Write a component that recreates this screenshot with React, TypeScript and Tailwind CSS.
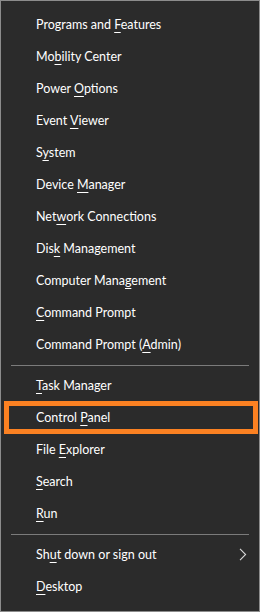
import React from "react";

type Item = { label: string; key?: number; highlight?: boolean; submenu?: boolean };

// index of the access-key letter that gets underlined
const groups: Item[][] = [
  [
    { label: "Programs and Features", key: 13 },
    { label: "Mobility Center", key: 2 },
    { label: "Power Options", key: 6 },
    { label: "Event Viewer", key: 6 },
    { label: "System", key: 1 },
    { label: "Device Manager", key: 7 },
    { label: "Network Connections", key: 3 },
    { label: "Disk Management", key: 3 },
    { label: "Computer Management", key: 13 },
    { label: "Command Prompt", key: 0 },
    { label: "Command Prompt (Admin)", key: 16 },
  ],
  [
    { label: "Task Manager", key: 0 },
    { label: "Control Panel", key: 8, highlight: true },
    { label: "File Explorer", key: 5 },
    { label: "Search", key: 0 },
    { label: "Run", key: 0 },
  ],
  [
    { label: "Shut down or sign out", key: 2, submenu: true },
    { label: "Desktop", key: 0 },
  ],
];

function Label({ text, k }: { text: string; k?: number }) {
  if (k === undefined) return <span>{text}</span>;
  return (
    <span>
      {text.slice(0, k)}
      <span className="underline underline-offset-[3px] decoration-1">{text[k]}</span>
      {text.slice(k + 1)}
    </span>
  );
}

function MenuRow({ item }: { item: Item }) {
  return (
    <div className="relative flex h-8 items-center pl-[35px] pr-3 pt-[2px]">
      <Label text={item.label} k={item.key} />
      {item.submenu && (
        <svg className="ml-auto -mt-[2px]" width="8" height="13" viewBox="0 0 8 13" fill="none">
          <path d="M1 0.8 L6.6 6.5 L1 12.2" stroke="#d8d8d8" strokeWidth="1.1" />
        </svg>
      )}
      {item.highlight && (
        <div className="absolute left-[3px] right-[1px] top-0 bottom-[-1px] border-[5px] border-[#fb8122]" />
      )}
    </div>
  );
}

export default function App() {
  return (
    <div className="h-[612px] w-[260px] border border-[#8c8c8c] bg-[#2b2b2b] pt-[7px] text-[12.5px] leading-[28px] text-white font-['Lato',sans-serif]">
      {groups.map((g, gi) => (
        <div key={gi}>
          {gi > 0 && <div className="mx-[10px] mt-[5px] mb-[3px] h-px bg-[#7b7b7b]" />}
          {g.map((item) => (
            <MenuRow key={item.label} item={item} />
          ))}
        </div>
      ))}
    </div>
  );
}
